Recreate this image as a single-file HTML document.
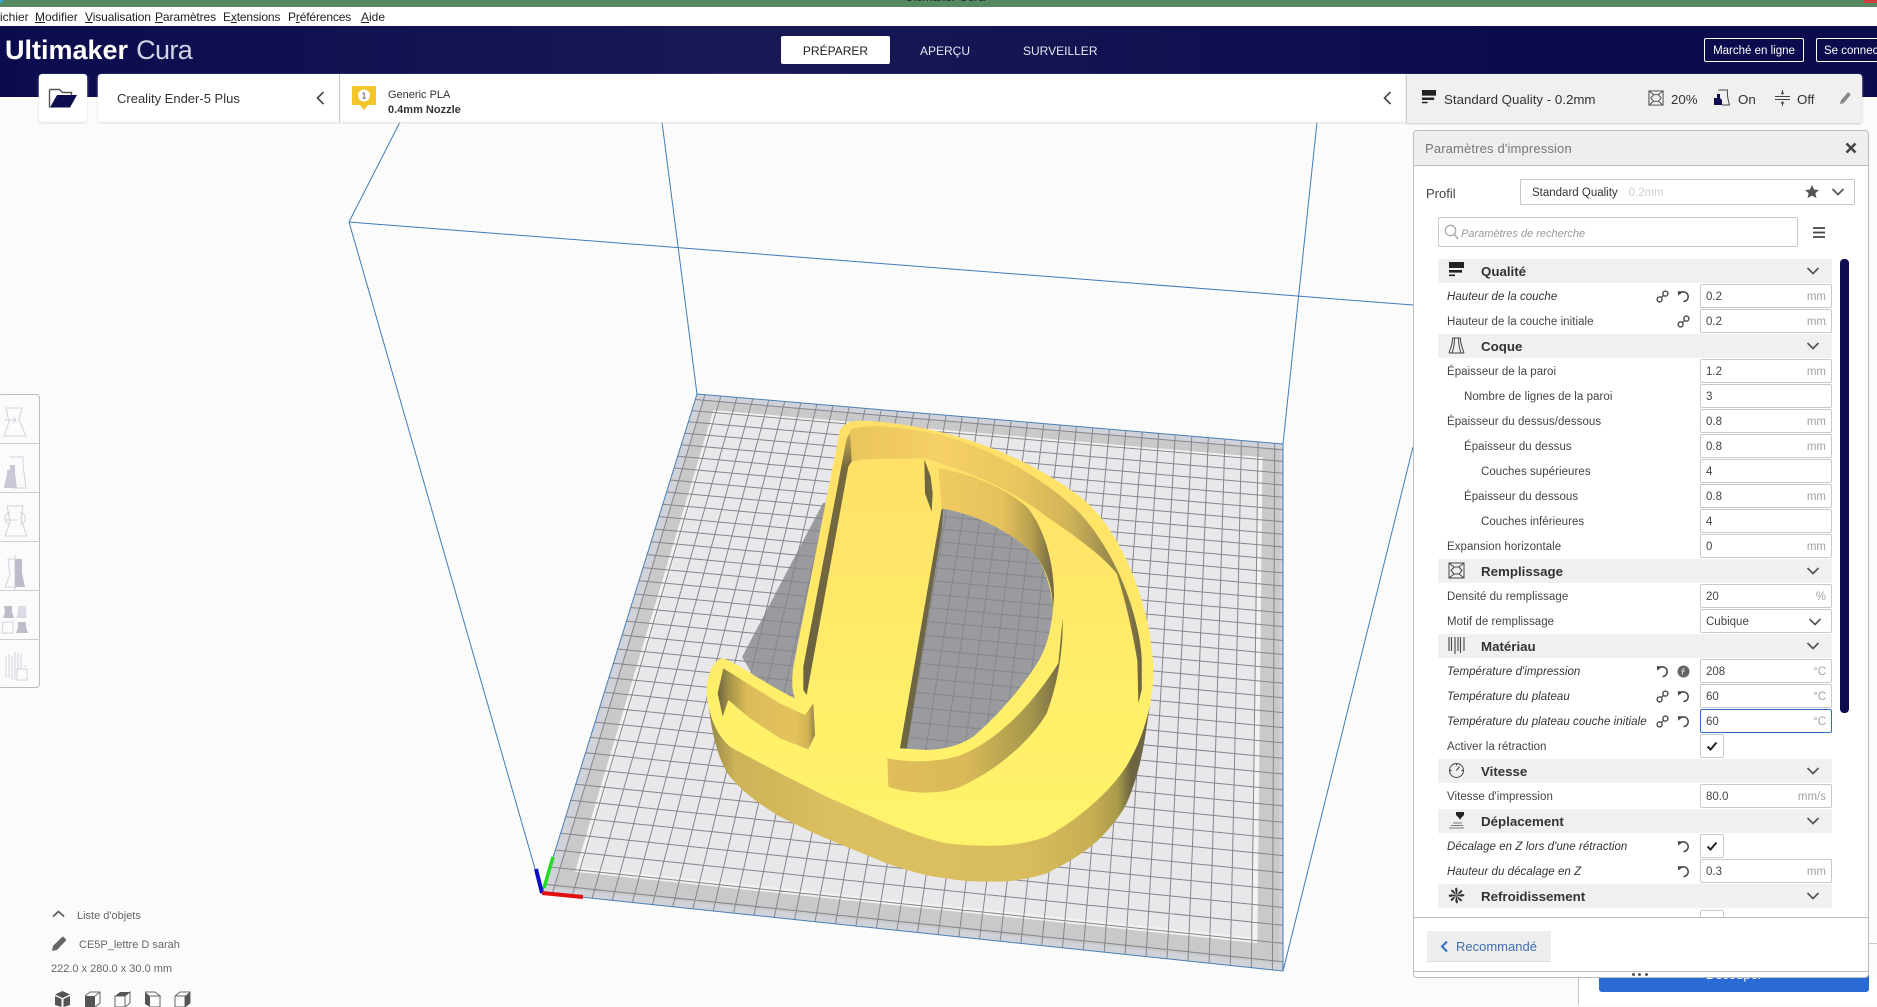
<!DOCTYPE html>
<html lang="fr"><head><meta charset="utf-8"><title>Ultimaker Cura</title>
<style>
html,body{margin:0;padding:0;background:#fbfbfb}
body{width:1877px;height:1005px;position:relative;overflow:hidden;font-family:"Liberation Sans",Arial,sans-serif;color:#444}
.a,.a *{box-sizing:border-box}
.a{position:absolute}
#scene{position:absolute;left:0;top:0}
.m{position:absolute;top:10px;font-size:12px;line-height:15px;color:#222}
.m u{text-decoration:underline}
.c{position:absolute;left:1438px;width:394px;height:24px;background:#f0f0f0}
.c svg.ci{position:absolute;left:10px;top:3px;width:17px;height:17px}
.c b{position:absolute;left:43px;top:1px;line-height:24px;font-size:13.3px;color:#333}
.c svg.cv{position:absolute;left:368px;top:8px;width:14px;height:8px}
.l{position:absolute;height:24px;line-height:26px;font-size:11.5px;color:#444;white-space:nowrap;letter-spacing:.05px}
.l.it{font-style:italic;font-size:11.5px;color:#333}
.i{position:absolute;left:1700px;width:132px;height:24px;border:1px solid #c9c9c9;border-radius:2px;background:#fff;padding-left:5px;line-height:24px;font-size:11.5px;color:#444;box-sizing:border-box}
.i span{position:absolute;right:5px;top:0;color:#a2a2a2}
.k{position:absolute;left:1700px;width:24px;height:24px;border:1px solid #c9c9c9;border-radius:2px;background:#fff;box-sizing:border-box}
.k svg{position:absolute;left:5px;top:6px;width:12px;height:10px}
.ic{position:absolute;width:13px;height:13px}
</style></head><body>
<svg width="0" height="0" style="position:absolute">
<defs>
<symbol id="q" viewBox="0 0 17 17"><rect x="1" y="0" width="15" height="6" fill="#222"/><rect x="1" y="8" width="13" height="2.6" fill="#222"/><rect x="1" y="12.5" width="6" height="1.6" fill="#222"/></symbol>
<symbol id="s" viewBox="0 0 17 17"><path d="M4.500 1h8M4.500 1C5 6 2.500 11 1 16M12.500 1c-.5 5 2 10 3.500 15M1 16h15M6.500 1c0 5-1 11-2.500 15M10.500 1c0 5 1 11 2.500 15" fill="none" stroke="#444" stroke-width="1"/></symbol>
<symbol id="r" viewBox="0 0 17 17"><path d="M1 1h15v15H1zM1 1l5 4 5 0 5-4M1 16l5-4 5 0 5 4M6 5L3 8.500 6 12M11 5l3 3.500L11 12" fill="none" stroke="#444" stroke-width="1"/></symbol>
<symbol id="ma" viewBox="0 0 17 17"><path d="M1 0v14M3.500 0v14M7 0v17M10 0v14M12.500 0v16M16 0v14" fill="none" stroke="#444" stroke-width="1.100"/></symbol>
<symbol id="v" viewBox="0 0 17 17"><circle cx="8.500" cy="8.500" r="7" fill="none" stroke="#444" stroke-width="1"/><path d="M8.500 8.500l3-4M8.500 1.500v2M2 8.500h1.500M15 8.500h-1.500" stroke="#444" stroke-width="1.200"/></symbol>
<symbol id="d" viewBox="0 0 17 17"><path d="M8 0h8v3l-3 3-1 2-1-2-3-3z" fill="#222"/><path d="M5 11h9M3 13.500h12M1 16h15" stroke="#777" stroke-width="1"/></symbol>
<symbol id="f" viewBox="0 0 17 17"><path d="M8.500 8.500C8 5 6 2 8 .5c2 .5 2 4 .5 8zM8.500 8.500C12 8 15 6 16.500 8c-.5 2-4 2-8 .5zM8.500 8.500C9 12 11 15 9 16.500c-2-.5-2-4-.5-8zM8.500 8.500C5 9 2 11 .5 9c.5-2 4-2 8-.5zM8.500 8.500C6 6 3 5.500 3 3c2-1 4 2 5.500 5.500zM8.500 8.500c2.500-2.500 3-5.500 5.500-5.500 1 2-2 4-5.500 5.500zM8.500 8.500c2.500 2.500 5.500 3 5.500 5.500-2 1-4-2-5.500-5.500zM8.500 8.500C6 11 5.500 14 3 14c-1-2 2-4 5.500-5.500z" fill="#333"/></symbol>
<symbol id="chev" viewBox="0 0 14 8"><path d="M1.500 1L7 6.500 12.500 1" fill="none" stroke="#555" stroke-width="1.700"/></symbol>
<symbol id="lk" viewBox="0 0 13 13"><circle cx="3.600" cy="9.400" r="2.500" fill="none" stroke="#555" stroke-width="1.500"/><circle cx="9.400" cy="3.600" r="2.500" fill="none" stroke="#555" stroke-width="1.500"/><path d="M5 8l3-3" stroke="#555" stroke-width="1.500"/></symbol>
<symbol id="rs" viewBox="0 0 13 13"><path d="M3 3.300A4.800 4.800 0 1 1 6.500 11.500" fill="none" stroke="#444" stroke-width="1.500"/><path d="M.8 1.200l5 .2-4.500 4.300z" fill="#444"/></symbol>
<symbol id="ck" viewBox="0 0 12 10"><path d="M1.500 5.500L4.500 8.500 10.500 1.500" fill="none" stroke="#222" stroke-width="2"/></symbol>
<linearGradient id="top" gradientUnits="userSpaceOnUse" x1="0" y1="122" x2="0" y2="1400"><stop offset="0" stop-color="#ffdf67"/><stop offset=".35" stop-color="#ffe668"/><stop offset=".7" stop-color="#fff06a"/><stop offset="1" stop-color="#fff36c"/></linearGradient>
<linearGradient id="body" gradientUnits="userSpaceOnUse" x1="85" y1="0" x2="1420" y2="0"><stop offset="0" stop-color="#8f8544"/><stop offset=".06" stop-color="#cdb257"/><stop offset=".3" stop-color="#dcc060"/><stop offset=".7" stop-color="#dabd5e"/><stop offset=".86" stop-color="#c9af54"/><stop offset=".92" stop-color="#a89b4a"/><stop offset=".95" stop-color="#6e6643"/><stop offset="1" stop-color="#6a6240"/></linearGradient>
<linearGradient id="bandB" gradientUnits="userSpaceOnUse" x1="510" y1="0" x2="1385" y2="0"><stop offset="0" stop-color="#eac45c"/><stop offset=".3" stop-color="#f5d066"/><stop offset=".55" stop-color="#ecc75f"/><stop offset=".75" stop-color="#d0b458"/><stop offset=".92" stop-color="#8e8248"/><stop offset="1" stop-color="#6e6643"/></linearGradient>
<linearGradient id="bandC" gradientUnits="userSpaceOnUse" x1="775" y1="0" x2="1122" y2="0"><stop offset="0" stop-color="#f0cb62"/><stop offset=".55" stop-color="#e6c25b"/><stop offset=".8" stop-color="#b8a04e"/><stop offset="1" stop-color="#6e6643"/></linearGradient>
<linearGradient id="bandG" gradientUnits="userSpaceOnUse" x1="622" y1="0" x2="1148" y2="0"><stop offset="0" stop-color="#e0bd5a"/><stop offset=".45" stop-color="#d9b958"/><stop offset=".8" stop-color="#a89a4c"/><stop offset="1" stop-color="#746b44"/></linearGradient>
<linearGradient id="bandF" gradientUnits="userSpaceOnUse" x1="113" y1="0" x2="405" y2="0"><stop offset="0" stop-color="#6e6643"/><stop offset=".12" stop-color="#a49448"/><stop offset=".3" stop-color="#dcbb5a"/><stop offset=".8" stop-color="#e4c25c"/><stop offset=".93" stop-color="#d0b254"/><stop offset="1" stop-color="#8e8248"/></linearGradient>
<linearGradient id="groove" gradientUnits="userSpaceOnUse" x1="0" y1="150" x2="0" y2="945"><stop offset="0" stop-color="#cdb052"/><stop offset=".14" stop-color="#75693f"/><stop offset="1" stop-color="#6a6240"/></linearGradient>
</defs></svg>

<svg id="scene" width="1877" height="1005" viewBox="0 0 1877 1005">
<rect width="1877" height="1005" fill="#fbfbfb"/>
<g id="plate"></g>
<g fill="none" stroke="#3f7cb8" stroke-width="1">
<path d="M349 222L400 122M349 222L542 893M349 222L1413 305M662 122L697 394M1317 122L1283 444M1413 447L1283 971M1283 444V971"/>
</g>
<g transform="translate(680,380) scale(.33333)">
<path d="M85 970C95 1070 120 1150 150 1190C200 1250 260 1285 300 1310C350 1335 400 1360 450 1380C510 1405 570 1430 620 1450C680 1470 740 1490 800 1495C850 1505 900 1505 950 1505C1000 1505 1050 1495 1100 1480C1160 1450 1210 1420 1250 1385C1290 1345 1320 1310 1340 1270C1375 1190 1390 1110 1400 1040C1410 980 1418 920 1420 870L1300 1150 1000 1340 300 1150Z" fill="url(#body)"/>
<path fill-rule="evenodd" fill="url(#top)" d="M480 150Q495 122 545 122C750 130 1000 200 1200 350C1330 450 1420 700 1420 880C1420 950 1400 1050 1350 1140C1310 1215 1210 1310 1100 1370C1000 1405 900 1400 800 1390C680 1365 560 1300 450 1255C340 1200 220 1140 150 1100C105 1060 85 1000 80 940C78 890 100 835 130 835C175 850 260 915 345 955C335 930 335 900 340 860L480 150Z
M785 385C900 405 1000 460 1070 530C1110 590 1125 680 1115 720C1105 790 1085 830 1065 860C1020 930 950 1010 880 1070C840 1095 800 1108 740 1110L660 1105Z"/>
<path d="M784 392L790 385 785 450 680 1105 660 1105Z" fill="#6e6643"/>
<path d="M515 150L515 245 505 260 380 945 370 930 370 860 500 175Z" fill="url(#groove)"/>
<path d="M510 150C540 135 620 135 700 150C900 175 1100 300 1200 400C1310 520 1375 700 1385 830L1385 930C1375 850 1350 700 1310 580C1260 520 1180 465 1100 410C1040 365 950 300 735 235C650 238 560 232 515 245Z" fill="url(#bandB)"/>
<path d="M733 238L752 290 758 340 755 395 735 340Z" fill="#6e6643"/>
<path d="M775 265C870 280 970 320 1040 380C1090 440 1122 540 1122 650L1118 700C1120 640 1110 590 1070 530C1000 460 900 405 785 385Z" fill="url(#bandC)"/>
<path d="M622 1135C690 1150 770 1145 830 1130C930 1095 1040 1000 1135 850L1148 715C1150 820 1130 920 1100 1000C1060 1070 960 1170 830 1225C760 1245 680 1240 625 1220Z" fill="url(#bandG)"/>
<path d="M130 865L210 915 300 970 375 1005 400 970 405 1065 385 1108 300 1075 210 1015 145 960 128 1010 113 940Z" fill="url(#bandF)"/>
<path d="M1372 830L1385 840 1385 930 1375 970Z" fill="#6e6643"/>
</g>
<path d="M536 869L542 893" stroke="#0a0ac8" stroke-width="4"/>
<path d="M544 888L553 857" stroke="#22dd22" stroke-width="3.500"/>
<path d="M542 893L583 897" stroke="#e01010" stroke-width="4"/>
</svg>

<!-- title bar -->
<div class="a" style="left:0;top:0;width:1877px;height:7px;background:#558a60;overflow:hidden">
<div class="a" style="left:905px;top:-10px;font-size:12px;color:#222;white-space:nowrap">Ultimaker Cura</div>
<div class="a" style="left:1864px;top:0;width:13px;height:3px;background:#d04040"></div>
<div class="a" style="left:0;top:0;width:3px;height:3px;background:#3aa0d0"></div>
</div>
<div class="a" style="left:0;top:7px;width:1877px;height:19px;background:#fff"></div>
<div class="m" style="left:0;">ichier</div>
<div class="m" style="left:35px"><u>M</u>odifier</div>
<div class="m" style="left:85px;letter-spacing:-.1px"><u>V</u>isualisation</div>
<div class="m" style="left:155px;letter-spacing:-.1px"><u>P</u>aramètres</div>
<div class="m" style="left:223px;letter-spacing:-.15px">E<u>x</u>tensions</div>
<div class="m" style="left:288px;letter-spacing:-.15px">P<u>r</u>éférences</div>
<div class="m" style="left:361px"><u>A</u>ide</div>

<!-- header -->
<div class="a" style="left:0;top:26px;width:1877px;height:71px;background:linear-gradient(90deg,#0b0b4e 0%,#191955 40%,#0b0b4e 80%)"></div>
<div class="a" style="left:5px;top:34px;font-size:27px;line-height:32px;color:#fff;font-weight:bold;white-space:nowrap">Ultimaker<span style="font-weight:normal;color:#d4d4e6;margin-left:8px;letter-spacing:-.6px">Cura</span></div>
<div class="a" style="left:781px;top:36px;width:109px;height:28px;background:#fff;border-radius:2px;text-align:center;line-height:30px;font-size:12px;color:#222">PRÉPARER</div>
<div class="a" style="left:920px;top:37px;line-height:28px;font-size:12px;color:#e8e8f2">APERÇU</div>
<div class="a" style="left:1023px;top:37px;line-height:28px;font-size:12px;color:#e8e8f2">SURVEILLER</div>
<div class="a" style="left:1704px;top:38px;width:100px;height:24px;border:1px solid #fff;border-radius:2px;text-align:center;line-height:24px;font-size:11.5px;color:#fff">Marché en ligne</div>
<div class="a" style="left:1816px;top:38px;width:80px;height:24px;border:1px solid #fff;border-radius:2px;padding-left:7px;line-height:24px;font-size:11.5px;color:#fff;white-space:nowrap">Se connecter</div>

<!-- toolbar row -->
<div class="a" style="left:39px;top:74px;width:48px;height:48px;background:#fff;border-radius:3px;box-shadow:0 1px 2px #ddd"></div>
<svg class="a" style="left:48px;top:85px" width="30" height="26" viewBox="0 0 30 26"><path d="M1.500 4.500h10l3 3h9v3M1.500 4.500v18" fill="none" stroke="#555" stroke-width="1.400"/><path d="M9 10h20l-7 12.500H2z" fill="#0d0d4f"/></svg>
<div class="a" style="left:98px;top:74px;width:1309px;height:48px;background:#fff;border-radius:3px 0 0 0;box-shadow:0 1px 2px #ddd"></div>
<div class="a" style="left:117px;top:75px;line-height:48px;font-size:13px;color:#333;white-space:nowrap">Creality Ender-5 Plus</div>
<svg class="a" style="left:316px;top:91px" width="9" height="14" viewBox="0 0 9 14"><path d="M7.500 1L1.500 7l6 6" fill="none" stroke="#444" stroke-width="1.600"/></svg>
<div class="a" style="left:339px;top:74px;width:1px;height:48px;background:#c8c8c8"></div>
<svg class="a" style="left:352px;top:86px" width="24" height="24" viewBox="0 0 24 24"><path d="M1 0h22a1 1 0 0 1 1 1v17a1 1 0 0 1-1 1h-7l-4 5-4-5H1a1 1 0 0 1-1-1V1a1 1 0 0 1 1-1z" fill="#f3c52a"/><circle cx="12" cy="9.500" r="6" fill="#fff"/><text x="12" y="12.500" font-size="8.500" text-anchor="middle" fill="#333" font-family="Liberation Sans">1</text></svg>
<div class="a" style="left:388px;top:88px;line-height:14px;font-size:11px;color:#333;white-space:nowrap">Generic PLA</div>
<div class="a" style="left:388px;top:103px;line-height:14px;font-size:11px;font-weight:bold;color:#333;white-space:nowrap">0.4mm Nozzle</div>
<svg class="a" style="left:1383px;top:91px" width="9" height="14" viewBox="0 0 9 14"><path d="M7.500 1L1.500 7l6 6" fill="none" stroke="#444" stroke-width="1.600"/></svg>
<div class="a" style="left:1406px;top:74px;width:456px;height:49px;background:#f0f0f0;border-left:1px solid #d0d0d0;border-radius:0 3px 3px 0;box-shadow:0 1px 2px #ccc"></div>
<svg class="a" style="left:1421px;top:90px;" width="16" height="16"><use href="#q"/></svg>
<div class="a" style="left:1444px;top:75px;line-height:49px;font-size:13.3px;color:#333;white-space:nowrap">Standard Quality - 0.2mm</div>
<svg class="a" style="left:1648px;top:90px" width="16" height="16"><use href="#r"/></svg>
<div class="a" style="left:1671px;top:75px;line-height:49px;font-size:13.3px;color:#333">20%</div>
<svg class="a" style="left:1714px;top:89px" width="16" height="17" viewBox="0 0 16 17"><path d="M4.500 1h9c-.5 5 .5 10 2 15H8" fill="none" stroke="#444"/><path d="M0 16V9h3V5h3v4l2 2v5z" fill="#0d0d4f"/></svg>
<div class="a" style="left:1738px;top:75px;line-height:49px;font-size:13.3px;color:#333">On</div>
<svg class="a" style="left:1775px;top:90px" width="15" height="16" viewBox="0 0 15 16"><path d="M0 6.500h15M0 9.500h15M7.500 0v4M7.500 12v4" stroke="#444" fill="none"/><path d="M5.500 2.500h4L7.500 5zM5.500 13.500h4L7.500 11z" fill="#444"/></svg>
<div class="a" style="left:1797px;top:75px;line-height:49px;font-size:13.3px;color:#333">Off</div>
<svg class="a" style="left:1840px;top:92px" width="11" height="12" viewBox="0 0 11 12"><path d="M0 12l.8-3.500L7.500.8a1 1 0 0 1 1.400 0l1.300 1.300a1 1 0 0 1 0 1.400L3.500 11.200z" fill="#888"/></svg>

<!-- left tools -->
<div class="a" style="left:-2px;top:394px;width:42px;height:294px;background:#fbfbfb;border:1px solid #bcbcbc;border-radius:4px"></div>
<div class="a" style="left:0;top:443px;width:40px;height:1px;background:#cfcfcf"></div>
<div class="a" style="left:0;top:492px;width:40px;height:1px;background:#cfcfcf"></div>
<div class="a" style="left:0;top:541px;width:40px;height:1px;background:#cfcfcf"></div>
<div class="a" style="left:0;top:590px;width:40px;height:1px;background:#cfcfcf"></div>
<div class="a" style="left:0;top:639px;width:40px;height:1px;background:#cfcfcf"></div>
<svg class="a" style="left:0;top:394px" width="40" height="294" viewBox="0 0 40 294" fill="none" stroke="#d2d2dc" stroke-width="1">
<path d="M6 14h16l-3 12 7 16H4l5-14zM4 26h12m-3-3l3 3-3 3"/>
<path d="M9 63h14v8l3 23H14"/><path d="M4 93l3-12v-5h3v-5h5v8l2 15H4z" fill="#c8c8d6" stroke="none"/>
<path d="M7 112h16l-2 14 6 16H5l5-14zM10 118c-7 2-7 12 0 12M20 118c7 2 7 12 0 12M5 126h12"/>
<path d="M15 165v28H5l5-12-2-16zM15 161v36"/><path d="M15 165h7l0 14 3 14H15z" fill="#bcbccb" stroke="none"/>
<path d="M4 212h8v6l2 6H3l2-6z" fill="#bcbcca" stroke="none"/><path d="M18 212h8v6l1 6H16l2-6z" fill="#dcdce6" stroke="none"/><path d="M3 228h10v11H2z"/><path d="M18 228h8v5l2 6H16l2-6z" fill="#bcbcca" stroke="none"/>
<path d="M6 262v22M9 260v24M12 262v24M15 258v28M18 258v24M21 260v18M24 272h2"/><rect x="17" y="275" width="10" height="11" fill="#fbfbfb"/>
</svg>

<!-- bottom left -->
<svg class="a" style="left:52px;top:910px" width="13" height="8" viewBox="0 0 13 8"><path d="M1 6.500L6.500 1.500 12 6.500" fill="none" stroke="#555" stroke-width="1.600"/></svg>
<div class="a" style="left:77px;top:909px;line-height:14px;font-size:11px;color:#666;white-space:nowrap">Liste d'objets</div>
<svg class="a" style="left:52px;top:936px" width="15" height="15" viewBox="0 0 15 15"><path d="M0 15l1-5L10 1a1.200 1.200 0 0 1 1.700 0l2 2a1.200 1.200 0 0 1 0 1.700L5 14z" fill="#666"/></svg>
<div class="a" style="left:79px;top:938px;line-height:14px;font-size:11px;color:#666;white-space:nowrap">CE5P_lettre D sarah</div>
<div class="a" style="left:51px;top:962px;line-height:14px;font-size:11px;color:#666;white-space:nowrap">222.0 x 280.0 x 30.0 mm</div>
<svg class="a" style="left:54px;top:991px" width="140" height="16" viewBox="0 0 140 16">
<path d="M1 3.500L8.500 0 16 3.500 8.500 7zM1 5v9l6.500 2V8zM16 5v9l-6.500 2V8z" fill="#555"/>
<path d="M31 5h10v11H31z" fill="#555"/><path d="M31 5l5-4h10v11l-5 4M41 5l5-4" fill="none" stroke="#666"/>
<path d="M61 5h10v11H61zM71 5l5-4v11l-5 4" fill="none" stroke="#666"/><path d="M61 5l5-4h10l-5 4z" fill="#555"/>
<path d="M91 1l5 4v11l-5-3z" fill="#555"/><path d="M91 1h10l5 4H96M106 5v11H96" fill="none" stroke="#666"/>
<path d="M121 5l5-4h10v11l-5 4H121zM121 5h10v11" fill="none" stroke="#666"/><path d="M131 5l5-4v11l-5 4z" fill="#555"/>
</svg>

<!-- under panel -->
<div class="a" style="left:1578px;top:978px;width:299px;height:27px;background:#fff;border-left:1px solid #c4c4c4"></div>
<div class="a" style="left:1868px;top:943px;width:9px;height:1px;background:#c8c8c8"></div>
<div class="a" style="left:1599px;top:970px;width:270px;height:22px;background:#2a6bd3;border-radius:0 0 3px 3px;color:#fff;text-align:center;font-size:13px;line-height:10px">Découper</div>

<!-- panel -->
<div class="a" style="left:1413px;top:130px;width:456px;height:848px;background:#fff;border:1px solid #bbb;border-radius:4px"></div>
<div class="a" style="left:1414px;top:131px;width:454px;height:35px;background:#eee;border-bottom:1px solid #bbb;border-radius:3px 3px 0 0"></div>
<div class="a" style="left:1425px;top:131px;line-height:35px;font-size:13px;color:#777;white-space:nowrap;letter-spacing:.15px">Paramètres d'impression</div>
<svg class="a" style="left:1845px;top:142px" width="12" height="12" viewBox="0 0 12 12"><path d="M1.500 1.500l9 9M10.500 1.500l-9 9" stroke="#444" stroke-width="2.600"/></svg>
<div class="a" style="left:1426px;top:185px;line-height:18px;font-size:13px;color:#444">Profil</div>
<div class="a" style="left:1520px;top:179px;width:335px;height:26px;border:1px solid #c8c8c8;border-radius:2px;background:#fff"></div>
<div class="a" style="left:1532px;top:180px;line-height:27px;font-size:11.5px;color:#333;white-space:nowrap">Standard Quality<span style="color:#d0d0d0;margin-left:11px">0.2mm</span></div>
<svg class="a" style="left:1805px;top:185px" width="14" height="13" viewBox="0 0 14 13"><path d="M7 0l2.100 4.500 4.900.5-3.600 3.300 1 4.700L7 10.600 2.600 13l1-4.700L0 5l4.900-.5z" fill="#555"/></svg>
<svg class="a" style="left:1831px;top:188px" width="14" height="8"><use href="#chev"/></svg>
<div class="a" style="left:1438px;top:217px;width:360px;height:30px;border:1px solid #c8c8c8;border-radius:2px;background:#fff"></div>
<svg class="a" style="left:1444px;top:224px" width="15" height="16" viewBox="0 0 15 16"><circle cx="6.500" cy="6.500" r="5.200" fill="none" stroke="#aaa" stroke-width="1.300"/><path d="M10.500 10.500l3.500 4.500" stroke="#aaa" stroke-width="1.500"/></svg>
<div class="a" style="left:1461px;top:219px;line-height:31px;font-size:11px;font-style:italic;color:#999;white-space:nowrap">Paramètres de recherche</div>
<svg class="a" style="left:1813px;top:227px" width="12" height="11" viewBox="0 0 12 11"><path d="M0 1h12M0 5.500h12M0 10h12" stroke="#444" stroke-width="1.700"/></svg>
<div class="a" style="left:1840px;top:259px;width:9px;height:454px;background:#0c0c4f;border-radius:4px"></div>

<!-- rows -->
<div class="c" style="top:259px"><svg class="ci"><use href="#q"/></svg><b>Qualité</b><svg class="cv"><use href="#chev"/></svg></div>
<div class="l it" style="left:1447px;top:284px">Hauteur de la couche</div>
<svg class="ic" style="left:1656px;top:290px"><use href="#lk"/></svg><svg class="ic" style="left:1677px;top:290px"><use href="#rs"/></svg>
<div class="i" style="top:284px">0.2<span>mm</span></div>
<div class="l" style="left:1447px;top:309px">Hauteur de la couche initiale</div>
<svg class="ic" style="left:1677px;top:315px"><use href="#lk"/></svg>
<div class="i" style="top:309px">0.2<span>mm</span></div>

<div class="c" style="top:334px"><svg class="ci"><use href="#s"/></svg><b>Coque</b><svg class="cv"><use href="#chev"/></svg></div>
<div class="l" style="left:1447px;top:359px">Épaisseur de la paroi</div>
<div class="i" style="top:359px">1.2<span>mm</span></div>
<div class="l" style="left:1464px;top:384px">Nombre de lignes de la paroi</div>
<div class="i" style="top:384px">3</div>
<div class="l" style="left:1447px;top:409px">Épaisseur du dessus/dessous</div>
<div class="i" style="top:409px">0.8<span>mm</span></div>
<div class="l" style="left:1464px;top:434px">Épaisseur du dessus</div>
<div class="i" style="top:434px">0.8<span>mm</span></div>
<div class="l" style="left:1481px;top:459px">Couches supérieures</div>
<div class="i" style="top:459px">4</div>
<div class="l" style="left:1464px;top:484px">Épaisseur du dessous</div>
<div class="i" style="top:484px">0.8<span>mm</span></div>
<div class="l" style="left:1481px;top:509px">Couches inférieures</div>
<div class="i" style="top:509px">4</div>
<div class="l" style="left:1447px;top:534px">Expansion horizontale</div>
<div class="i" style="top:534px">0<span>mm</span></div>

<div class="c" style="top:559px"><svg class="ci"><use href="#r"/></svg><b>Remplissage</b><svg class="cv"><use href="#chev"/></svg></div>
<div class="l" style="left:1447px;top:584px">Densité du remplissage</div>
<div class="i" style="top:584px">20<span>%</span></div>
<div class="l" style="left:1447px;top:609px">Motif de remplissage</div>
<div class="i" style="top:609px;line-height:25px">Cubique<svg style="position:absolute;left:107px;top:8px;width:14px;height:8px"><use href="#chev"/></svg></div>

<div class="c" style="top:634px"><svg class="ci"><use href="#ma"/></svg><b>Matériau</b><svg class="cv"><use href="#chev"/></svg></div>
<div class="l it" style="left:1447px;top:659px">Température d'impression</div>
<svg class="ic" style="left:1656px;top:665px"><use href="#rs"/></svg>
<svg class="ic" style="left:1677px;top:665px" viewBox="0 0 13 13"><circle cx="6.500" cy="6.500" r="6" fill="#666"/><path d="M7.500 3.500c-1.500 0-1.500 1-1.700 2.500l-.6 3.500M4.500 6h3.200" stroke="#ddd" stroke-width="1" fill="none"/></svg>
<div class="i" style="top:659px">208<span>°C</span></div>
<div class="l it" style="left:1447px;top:684px">Température du plateau</div>
<svg class="ic" style="left:1656px;top:690px"><use href="#lk"/></svg><svg class="ic" style="left:1677px;top:690px"><use href="#rs"/></svg>
<div class="i" style="top:684px">60<span>°C</span></div>
<div class="l it" style="left:1447px;top:709px">Température du plateau couche initiale</div>
<svg class="ic" style="left:1656px;top:715px"><use href="#lk"/></svg><svg class="ic" style="left:1677px;top:715px"><use href="#rs"/></svg>
<div class="i" style="top:709px;border-color:#2e6fc4">60<span>°C</span></div>
<div class="l" style="left:1447px;top:734px">Activer la rétraction</div>
<div class="k" style="top:734px"><svg><use href="#ck"/></svg></div>

<div class="c" style="top:759px"><svg class="ci"><use href="#v"/></svg><b>Vitesse</b><svg class="cv"><use href="#chev"/></svg></div>
<div class="l" style="left:1447px;top:784px">Vitesse d'impression</div>
<div class="i" style="top:784px">80.0<span>mm/s</span></div>

<div class="c" style="top:809px"><svg class="ci"><use href="#d"/></svg><b>Déplacement</b><svg class="cv"><use href="#chev"/></svg></div>
<div class="l it" style="left:1447px;top:834px">Décalage en Z lors d'une rétraction</div>
<svg class="ic" style="left:1677px;top:840px"><use href="#rs"/></svg>
<div class="k" style="top:834px"><svg><use href="#ck"/></svg></div>
<div class="l it" style="left:1447px;top:859px">Hauteur du décalage en Z</div>
<svg class="ic" style="left:1677px;top:865px"><use href="#rs"/></svg>
<div class="i" style="top:859px">0.3<span>mm</span></div>

<div class="c" style="top:884px"><svg class="ci"><use href="#f"/></svg><b>Refroidissement</b><svg class="cv"><use href="#chev"/></svg></div>
<div class="k" style="top:910px"></div>

<!-- footer -->
<div class="a" style="left:1414px;top:917px;width:454px;height:55px;background:#fff;border-top:1px solid #bbb;border-bottom:1px solid #bbb"></div>
<div class="a" style="left:1427px;top:931px;width:124px;height:31px;background:#eee;border-bottom:1px solid #ddd"></div>
<svg class="a" style="left:1440px;top:940px" width="9" height="13" viewBox="0 0 9 13"><path d="M7 1.500L2 6.500l5 5" fill="none" stroke="#2e6fc4" stroke-width="2"/></svg>
<div class="a" style="left:1456px;top:931px;line-height:31px;font-size:13px;color:#3f6fb5;white-space:nowrap">Recommandé</div>
<div class="a" style="left:1632px;top:973px;width:3px;height:3px;background:#555;border-radius:50%"></div>
<div class="a" style="left:1638px;top:973px;width:3px;height:3px;background:#555;border-radius:50%"></div>
<div class="a" style="left:1645px;top:973px;width:3px;height:3px;background:#555;border-radius:50%"></div>

<script>
(function(){
var P=[[697,394],[1283,444],[1283,971],[542,893]];
var x0=P[0][0],y0=P[0][1],x1=P[1][0],y1=P[1][1],x2=P[2][0],y2=P[2][1],x3=P[3][0],y3=P[3][1];
var dx1=x1-x2,dx2=x3-x2,sx=x0-x1+x2-x3,dy1=y1-y2,dy2=y3-y2,sy=y0-y1+y2-y3;
var D=dx1*dy2-dx2*dy1,g=(sx*dy2-dx2*sy)/D,h=(dx1*sy-sx*dy1)/D;
var a=x1-x0+g*x1,b=x3-x0+h*x3,c=x0,d=y1-y0+g*y1,e=y3-y0+h*y3,f=y0;
function T(u,v){var w=g*u+h*v+1;return ((a*u+b*v+c)/w).toFixed(1)+' '+((d*u+e*v+f)/w).toFixed(1);}
function Q(u0,v0,u1,v1,col){return '<path d="M'+T(u0,v0)+'L'+T(u1,v0)+'L'+T(u1,v1)+'L'+T(u0,v1)+'Z" fill="'+col+'"/>';}
var s='';
s+=Q(0,0,1,1,'#cfd2d8');
s+=Q(.013,.014,.995,.99,'#c9c9ca');
s+=Q(.036,.036,.966,.962,'#f2f2f3');
s+=Q(.044,.044,.958,.954,'#e8e8eb');
s+='<path d="M823 503L742 657 780 720 900 760 1060 780 1085 560 960 480Z" fill="#9a9b9f"/>';
var p='';
for(var i=0;i<36;i++){var t=(i+.5)/36;p+='M'+T(t,0)+'L'+T(t,1)+'M'+T(0,t)+'L'+T(1,t);}
s+='<path d="'+p+'" fill="none" stroke="#85858c" stroke-width="1"/>';
s+='<path d="M'+T(0,0)+'L'+T(1,0)+'L'+T(1,1)+'L'+T(0,1)+'Z" fill="none" stroke="#4a7fb5" stroke-width="1"/>';
document.getElementById('plate').innerHTML=s;
})();
</script>
</body></html>
